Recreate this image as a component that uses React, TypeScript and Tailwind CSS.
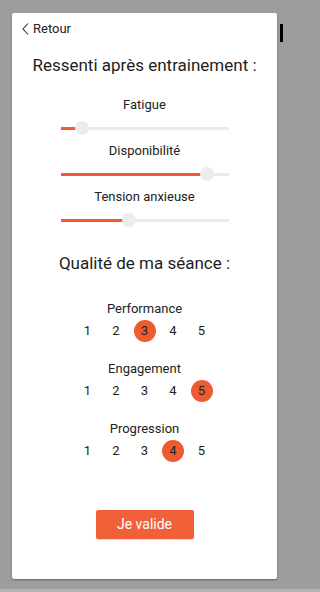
import React, { useState } from 'react'

const sliders = [
  { label: 'Fatigue', value: 13 },
  { label: 'Disponibilité', value: 87 },
  { label: 'Tension anxieuse', value: 41 },
]

const ratings = [
  { label: 'Performance', value: 3 },
  { label: 'Engagement', value: 5 },
  { label: 'Progression', value: 4 },
]

function Slider({ value }: { value: number }) {
  return (
    <div className="relative w-[168px] h-[14px] flex items-center">
      <div className="w-full h-[3px] bg-[#ebebeb]" />
      <div className="absolute left-0 h-[3px] bg-[#ee5b32]" style={{ width: `${value}%` }} />
      <div
        className="absolute w-[14px] h-[14px] rounded-full bg-[#ececec] -translate-x-1/2"
        style={{ left: `${value}%` }}
      />
    </div>
  )
}

function Rating({ label, initial }: { label: string; initial: number }) {
  const [value, setValue] = useState(initial)
  return (
    <div className="flex flex-col items-center">
      <div className="text-[13px] leading-[16px] text-[#222]">{label}</div>
      <div className="mt-[3px] w-[136px] flex justify-between">
        {[1, 2, 3, 4, 5].map((n) => (
          <button
            key={n}
            onClick={() => setValue(n)}
            className={
              n === value
                ? 'w-[22px] h-[22px] rounded-full bg-[#ee5b32] text-[13px] text-[#222] flex items-center justify-center'
                : 'w-[22px] h-[22px] rounded-full text-[13px] text-[#222] flex items-center justify-center'
            }
          >
            {n}
          </button>
        ))}
      </div>
    </div>
  )
}

export default function App() {
  return (
    <div className="h-[592px] bg-[#9d9d9d] flex flex-col font-['Roboto',sans-serif]">
      <div className="flex flex-1">
        <div className="ml-[12px] mt-[13px] w-[265px] h-[566px] bg-white rounded-[2px] shadow-[0_1px_2px_rgba(0,0,0,0.35)] flex flex-col items-center">
          <div className="self-start pt-[8px] pl-[10px] flex items-center gap-[4px] text-[13px] leading-[16px] text-[#222]">
            <svg width="7" height="12" viewBox="0 0 7 12" fill="none" stroke="#333" strokeWidth="1.1">
              <path d="M6 0.5 L1 6 L6 11.5" />
            </svg>
            <span>Retour</span>
          </div>

          <h1 className="mt-[17px] text-[17px] leading-[22px] text-[#1e1e1e]">Ressenti après entrainement :</h1>

          <div className="mt-[21px] flex flex-col items-center">
            {sliders.map((s, i) => (
              <div key={s.label} className={i === 0 ? 'flex flex-col items-center' : 'mt-[8px] flex flex-col items-center'}>
                <div className="text-[13px] leading-[16px] text-[#222]">{s.label}</div>
                <div className="mt-[8px]">
                  <Slider value={s.value} />
                </div>
              </div>
            ))}
          </div>

          <h2 className="mt-[25px] text-[17px] leading-[22px] text-[#1e1e1e]">Qualité de ma séance :</h2>

          <div className="mt-[27px] flex flex-col items-center gap-[19px]">
            {ratings.map((r) => (
              <Rating key={r.label} label={r.label} initial={r.value} />
            ))}
          </div>

          <button className="mt-[48px] w-[98px] h-[29px] bg-[#f0613a] rounded-[2px] text-white text-[14px] shadow-[0_1px_1px_rgba(0,0,0,0.15)]">
            Je valide
          </button>
        </div>
        <div className="ml-[3px] mt-[24px] w-[3px] h-[18px] bg-black" />
      </div>
      <div className="h-[3px] bg-[#b3b3b3]" />
    </div>
  )
}
